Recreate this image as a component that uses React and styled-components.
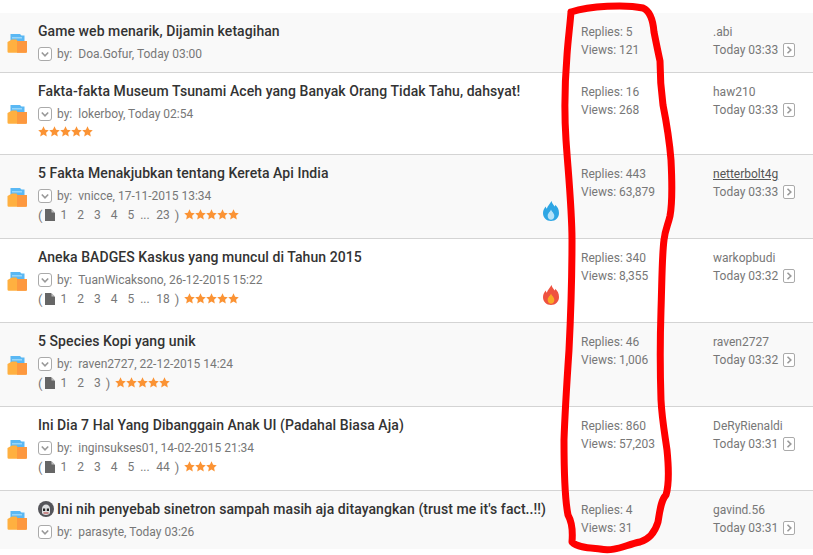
import React from "react";
import styled, { createGlobalStyle } from "styled-components";

const threads = [
  { title: "Game web menarik, Dijamin ketagihan", by: "Doa.Gofur", date: "Today 03:00", replies: "5", views: "121", last: ".abi", time: "Today 03:33", height: 60 },
  { title: "Fakta-fakta Museum Tsunami Aceh yang Banyak Orang Tidak Tahu, dahsyat!", by: "lokerboy", date: "Today 02:54", rating: 5, replies: "16", views: "268", last: "haw210", time: "Today 03:33", height: 82 },
  { title: "5 Fakta Menakjubkan tentang Kereta Api India", by: "vnicce", date: "17-11-2015 13:34", pages: "23", rating: 5, flame: "blue", replies: "443", views: "63,879", last: "netterbolt4g", hovered: true, time: "Today 03:33", height: 84 },
  { title: "Aneka BADGES Kaskus yang muncul di Tahun 2015", by: "TuanWicaksono", date: "26-12-2015 15:22", pages: "18", rating: 5, flame: "red", replies: "340", views: "8,355", last: "warkopbudi", time: "Today 03:32", height: 84 },
  { title: "5 Species Kopi yang unik", by: "raven2727", date: "22-12-2015 14:24", shortPages: true, rating: 5, replies: "46", views: "1,006", last: "raven2727", time: "Today 03:32", height: 84 },
  { title: "Ini Dia 7 Hal Yang Dibanggain Anak UI (Padahal Biasa Aja)", by: "inginsukses01", date: "14-02-2015 21:34", pages: "44", rating: 3, replies: "860", views: "57,203", last: "DeRyRienaldi", time: "Today 03:31", height: 84 },
  { title: "Ini nih penyebab sinetron sampah masih aja ditayangkan (trust me it's fact..!!)", avatar: true, by: "parasyte", date: "Today 03:26", replies: "4", views: "31", last: "gavind.56", time: "Today 03:31", height: 58 },
];

const GlobalStyle = createGlobalStyle`
  html, body {
    margin: 0;
    padding: 0;
    background: #fff;
    overflow: hidden;
  }
  body {
    font-family: Roboto, "Liberation Sans", sans-serif;
  }
`;

const Page = styled.div`
  position: relative;
  width: 813px;
  height: 555px;
  padding-top: 13px;
  box-sizing: border-box;
  overflow: hidden;
`;

const Row = styled.div`
  display: flex;
  align-items: stretch;
  height: ${(p) => p.$height}px;
  box-sizing: border-box;
  background: ${(p) => (p.$shaded ? "#f9f9f9" : "#fff")};
  border-bottom: ${(p) => (p.$flat ? "none" : "1px solid #d4d4d4")};
`;

const FolderCell = styled.div`
  width: 38px;
  flex: none;
  display: flex;
  align-items: center;
  padding-left: 7px;
  box-sizing: border-box;
`;

const Main = styled.div`
  flex: 1;
  min-width: 0;
  padding-top: 9px;
`;

const Title = styled.div`
  display: flex;
  align-items: center;
  gap: 3px;
  height: 18px;
  font-size: 14px;
  line-height: 18px;
  font-weight: 500;
  letter-spacing: 0.07px;
  color: #333;
  white-space: nowrap;
`;

const Avatar = styled.svg`
  flex: none;
`;

const Meta = styled.div`
  display: flex;
  align-items: center;
  margin-top: 6px;
  height: 16px;
  font-size: 12px;
  color: #777;
`;

const Toggle = styled.span`
  display: flex;
  align-items: center;
  justify-content: center;
  width: 14px;
  height: 14px;
  box-sizing: border-box;
  border: 1px solid #aaa;
  border-radius: 3px;
  background: #fff;
  margin-right: 5px;
`;

const By = styled.span`
  margin-right: 6px;
`;

const Extras = styled.div`
  display: flex;
  align-items: center;
  height: 14px;
  margin-top: 3px;
  font-size: 12px;
  color: #777;
`;

const PagedExtras = styled(Extras)`
  margin-top: 4px;
`;

const Bracket = styled.span`
  font-size: 13px;
`;

const PageNums = styled.span`
  display: flex;
  gap: 10px;
`;

const Dots = styled.span`
  width: 6px;
  margin-left: -4px;
`;

const CloseBracket = styled(Bracket)`
  margin-left: 5px;
  margin-right: 5px;
`;

const FileIcon = styled.svg`
  margin: 0 5px 0 3px;
  flex: none;
`;

const Stars = styled.span`
  display: flex;
  margin-top: -1px;
`;

const FlameCell = styled.div`
  width: 16px;
  flex: none;
  align-self: flex-end;
  margin-bottom: 17px;
  margin-right: 22px;
  line-height: 0;
`;

const Stats = styled.div`
  width: 132px;
  flex: none;
  padding-top: 10px;
  font-size: 12px;
  line-height: 18px;
  color: #777;
`;

const LastPost = styled.div`
  width: 100px;
  flex: none;
  padding-top: 10px;
  font-size: 12px;
  line-height: 18px;
  color: #777;
`;

const LastUser = styled.div`
  text-decoration: ${(p) => (p.$hovered ? "underline" : "none")};
  color: ${(p) => (p.$hovered ? "#555" : "#777")};
`;

const LastTime = styled.div`
  display: flex;
  align-items: center;
  gap: 5px;
`;

const GoBox = styled.span`
  display: flex;
  align-items: center;
  justify-content: center;
  width: 12px;
  height: 14px;
  box-sizing: border-box;
  border: 1px solid #aaa;
  border-radius: 2px;
  background: #fff;
`;

const Scribble = styled.svg`
  position: absolute;
  left: 0;
  top: 0;
  pointer-events: none;
`;

function Folder() {
  return (
    <svg width="20" height="20" viewBox="0 0 20 20">
      <path d="M3.500 1h9.500l1.500 1.500H17.500v9H3.500z" fill="#5ab8f4" />
      <rect x="5" y="4" width="10" height="1.500" fill="#97d6f9" />
      <path d="M0.500 9 5 6.500h4.500l1 1.500H20v10.500a1.200 1.200 0 0 1-1.200 1.200H1.700a1.200 1.200 0 0 1-1.200-1.200z" fill="#ffb040" />
      <path d="M10 8H20v10.500a1.200 1.200 0 0 1-1.200 1.200H10z" fill="#fd983f" />
    </svg>
  );
}

function Chevron({ right }) {
  return (
    <svg width="8" height="8" viewBox="0 0 8 8">
      <path d={right ? "M2.500 0.800 5.800 4 2.500 7.200" : "M0.800 2.500 4 5.800 7.200 2.500"} fill="none" stroke="#999" strokeWidth="1.600" />
    </svg>
  );
}

function Star() {
  return (
    <svg width="11" height="11" viewBox="0 0 24 24">
      <path d="M12 .8l3.500 7.400 8 1-5.900 5.500 1.600 8L12 18.700l-7.200 4 1.600-8L.5 9.200l8-1z" fill="#fb9334" />
    </svg>
  );
}

function Flame({ color }) {
  const outer = color === "blue" ? "#2ea6e4" : "#ef5240";
  const inner = color === "blue" ? "#b5e2f8" : "#f9a825";
  return (
    <svg width="16" height="20" viewBox="0 0 16 20">
      <path d="M8.600 0c.6 3 2.200 3.800 3.200 5.600.3-.6.4-1.200.4-1.800C14.600 6 16 8.500 16 12c0 4.600-3.400 8-8 8s-8-3.400-8-8c0-3 1.500-5 2.800-6.600.1 1 .4 1.800 1 2.400C4.600 4.800 6.800 3 8.600 0z" fill={outer} />
      <path d="M8 8.500c.5 2 3.300 3.500 3.300 6.400 0 2.200-1.500 3.800-3.300 3.800s-3.300-1.600-3.300-3.800C4.700 12 7.500 10.500 8 8.500z" fill={inner} />
    </svg>
  );
}

function Skull() {
  return (
    <Avatar width="16" height="16" viewBox="0 0 16 16">
      <circle cx="8" cy="8" r="8" fill="#55555a" />
      <path d="M4 8c0-3 1.800-4.500 4-4.500S12 5 12 8v3.500c0 1.500-1.500 2.500-4 2.500s-4-1-4-2.500z" fill="#dfe0e2" />
      <path d="M5 7.500h2.200v2.500H5zM8.800 7.500H11v2.500H8.800z" fill="#222" />
      <rect x="5.500" y="11.500" width="5" height="1" fill="#b03030" />
    </Avatar>
  );
}

function PageList({ last, short }) {
  const nums = short ? ["1", "2", "3"] : ["1", "2", "3", "4", "5"];
  return (
    <>
      <Bracket>(</Bracket>
      <FileIcon width="10" height="12" viewBox="0 0 10 12">
        <path d="M0 0h6l4 4v8H0z" fill="#666" />
        <path d="M6.500 0 10 3.500H6.500z" fill="#bbb" />
      </FileIcon>
      <PageNums>
        {nums.map((n) => (
          <span key={n}>{n}</span>
        ))}
        {last && <Dots>...</Dots>}
        {last && <span>{last}</span>}
      </PageNums>
      <CloseBracket>)</CloseBracket>
    </>
  );
}

function Rating({ count }) {
  return (
    <Stars>
      {Array.from({ length: count }, (_, i) => (
        <Star key={i} />
      ))}
    </Stars>
  );
}

function ThreadRow({ thread, shaded, flat }) {
  const { title, avatar, by, date, pages, shortPages, rating, flame, replies, views, last, hovered, time, height } = thread;
  const paged = pages || shortPages;
  return (
    <Row $height={height} $shaded={shaded} $flat={flat}>
      <FolderCell>
        <Folder />
      </FolderCell>
      <Main>
        <Title>
          {avatar && <Skull />}
          {title}
        </Title>
        <Meta>
          <Toggle>
            <Chevron />
          </Toggle>
          <By>by:</By>
          {by}, {date}
        </Meta>
        {paged && (
          <PagedExtras>
            <PageList last={pages} short={shortPages} />
            <Rating count={rating} />
          </PagedExtras>
        )}
        {!paged && rating && (
          <Extras>
            <Rating count={rating} />
          </Extras>
        )}
      </Main>
      {flame && (
        <FlameCell>
          <Flame color={flame} />
        </FlameCell>
      )}
      <Stats>
        <div>Replies: {replies}</div>
        <div>Views: {views}</div>
      </Stats>
      <LastPost>
        <LastUser $hovered={hovered}>{last}</LastUser>
        <LastTime>
          {time}
          <GoBox>
            <Chevron right />
          </GoBox>
        </LastTime>
      </LastPost>
    </Row>
  );
}

export default function App() {
  return (
    <>
      <GlobalStyle />
      <Page>
        {threads.map((t, i) => (
          <ThreadRow key={t.title} thread={t} shaded={i % 2 === 0} flat={i === threads.length - 1} />
        ))}
        <Scribble width="813" height="555" viewBox="0 0 813 555">
          <path
            d="M571 12C590 6 625 4 643 8C650 11 653 20 654 32C656 42 658 52 660 61C660 75 661 90 663 105C666 120 669 135 671 160C672 180 673 200 670 216C668 225 665 230 664 240C662 255 662 280 661 310C660 340 660 370 661 400C662 420 665 435 667 450C669 470 669 485 666 495C661 500 660 510 658 522C655 532 650 539 640 542C625 545 615 552 600 549C590 548 578 548 572 542C573 530 572 522 568 515C565 500 564 470 564 440C565 410 567 380 569 350C571 310 572 270 572 240C572 210 568 170 566 140C564 110 565 80 567 55C568 40 570 25 571 12"
            fill="none"
            stroke="#f00"
            strokeWidth="7"
            strokeLinecap="round"
            strokeLinejoin="round"
          />
        </Scribble>
      </Page>
    </>
  );
}
